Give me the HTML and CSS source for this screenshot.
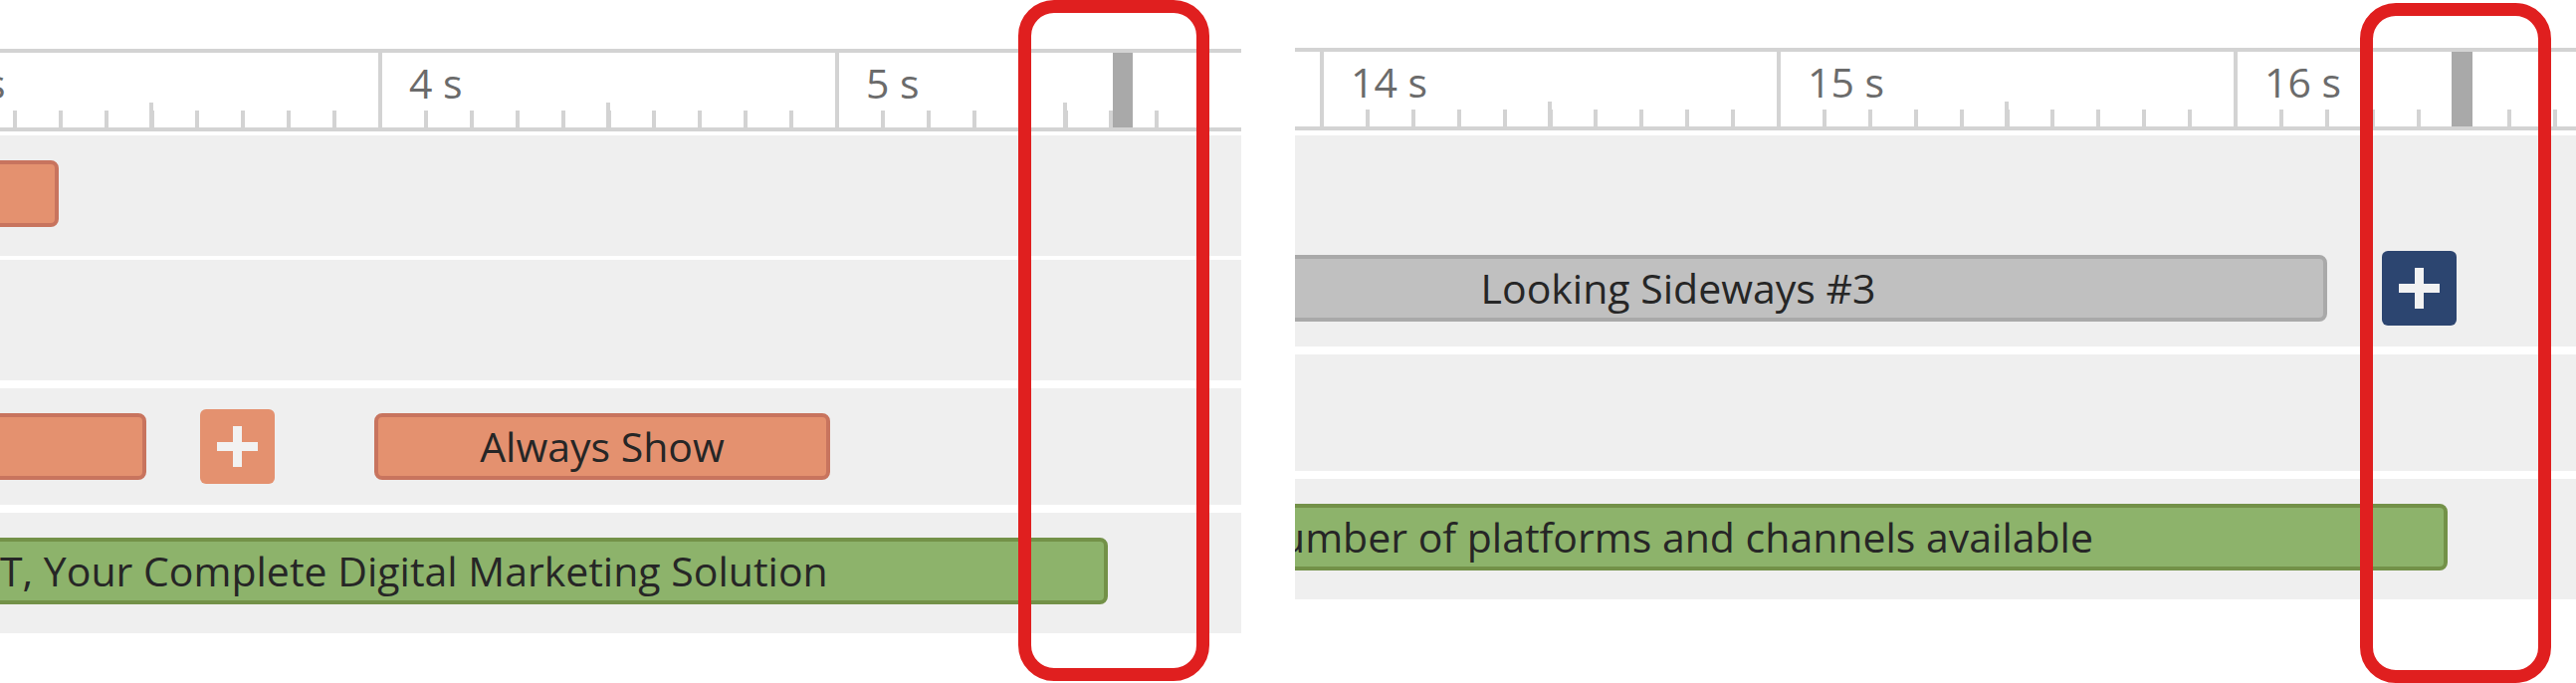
FILE: index.html
```html
<!DOCTYPE html>
<html>

<head>
    <meta charset="utf-8" />
    <title>Timeline</title>
    <link rel="stylesheet" href="styles.css">
</head>

<body>
    <div class="screen">
        <!-- left timeline -->
        <div class="panel panel-left">
            <div class="ruler">
                <div class="sec" style="margin-left:-79px">3 s</div>
                <div class="sec">4 s</div>
                <div class="sec">5 s</div>
                <div class="playhead" style="left:1118px;width:20px"></div>
            </div>
            <div class="track">
                <div class="clip clip-orange" style="left:-300px;width:359px"></div>
            </div>
            <div class="track gap-s"></div>
            <div class="track track-short">
                <div class="clip clip-orange" style="left:-300px;width:447px"></div>
                <div class="add add-orange" style="left:201px">
                    <svg viewBox="0 0 75 75"><rect x="17" y="33" width="41" height="9" /><rect x="33" y="17" width="9" height="41" /></svg>
                </div>
                <div class="clip clip-orange" style="left:376px;width:458px">Always Show</div>
            </div>
            <div class="track">
                <div class="clip clip-green text-left" style="left:-300px;width:1413px">T, Your Complete Digital Marketing Solution</div>
            </div>
        </div>

        <!-- right timeline -->
        <div class="panel panel-right">
            <div class="ruler">
                <div class="sec" style="margin-left:25px">14 s</div>
                <div class="sec">15 s</div>
                <div class="sec">16 s</div>
                <div class="playhead" style="left:1162px;width:21px"></div>
            </div>
            <div class="track track-tall">
                <div class="clip clip-gray" style="left:-267px;width:1304px">Looking Sideways #3</div>
                <div class="add add-navy" style="left:1092px">
                    <svg viewBox="0 0 75 75"><rect x="17" y="33" width="41" height="9" /><rect x="33" y="17" width="9" height="41" /></svg>
                </div>
            </div>
            <div class="track track-short"></div>
            <div class="track">
                <div class="clip clip-green text-right" style="left:-400px;width:1558px">number of platforms and channels available</div>
            </div>
        </div>

        <div class="mark" style="left:1023px;top:0;height:684px"></div>
        <div class="mark" style="left:2371px;top:3px;height:683px"></div>
    </div>
</body>

</html>
```

FILE: styles.css
```css
* {
    margin: 0;
    padding: 0;
    box-sizing: border-box;
}

body {
    background: #fff;
    font-family: "Open Sans", "Noto Sans", sans-serif;
    overflow: hidden;
}

.screen {
    position: relative;
    width: 2588px;
    height: 686px;
    display: flex;
    gap: 54px;
    overflow: hidden;
}

.panel {
    flex: none;
    display: flex;
    flex-direction: column;
    overflow: hidden;
}

.panel-left {
    width: 1247px;
    padding-top: 49px;
}

.panel-right {
    width: 1287px;
    padding-top: 48px;
}

/* ruler */
.ruler {
    position: relative;
    display: flex;
    height: 83px;
    border-top: 4px solid #d3d3d3;
    border-bottom: 4px solid #d3d3d3;
    overflow: hidden;
}

.sec {
    flex: none;
    width: 459px;
    height: 75px;
    padding: 10px 0 0 31px;
    font-size: 41px;
    line-height: 41px;
    color: #6b6b6b;
    white-space: nowrap;
    background:
        linear-gradient(#d3d3d3, #d3d3d3) 0 0 / 4px 100% no-repeat,
        linear-gradient(#d3d3d3, #d3d3d3) 229px 100% / 4px 25px no-repeat,
        repeating-linear-gradient(90deg, #d3d3d3 0 4px, transparent 4px 45.9px) 0 100% / 100% 17px no-repeat;
}

.playhead {
    position: absolute;
    top: 0;
    bottom: 0;
    background: #a9a9a9;
}

/* tracks */
.track {
    position: relative;
    flex: none;
    height: 121px;
    margin-top: 8px;
    background: #efefef;
}

.ruler + .track {
    margin-top: 4px;
}

.panel-right .ruler + .track {
    margin-top: 5px;
}

.track.gap-s {
    margin-top: 4px;
}

.track-short {
    height: 117px;
}

.track-tall {
    height: 212px;
}

.clip {
    position: absolute;
    top: 25px;
    height: 67px;
    border: 4px solid;
    border-radius: 8px;
    font-size: 41px;
    line-height: 59px;
    color: #262626;
    text-align: center;
    white-space: nowrap;
    overflow: hidden;
}

.track-tall .clip {
    top: 120px;
}

.clip-orange {
    background: #e4916f;
    border-color: #c8745e;
}

.clip-green {
    background: #8db36b;
    border-color: #739148;
}

.clip-gray {
    background: #c0c0c0;
    border-color: #a9a9a9;
}

.text-left {
    text-align: left;
    padding-left: 296px;
}

.text-right {
    text-align: right;
    padding-right: 352px;
}

.add {
    position: absolute;
    top: 21px;
    width: 75px;
    height: 75px;
    border-radius: 6px;
}

.track-tall .add {
    top: 116px;
}

.add svg {
    display: block;
    width: 75px;
    height: 75px;
    fill: #f2f2f2;
}

.add-orange {
    background: #e4916f;
}

.add-navy {
    background: #2c4570;
}

/* red marker boxes */
.mark {
    position: absolute;
    width: 192px;
    border: 13px solid #e01f1f;
    border-radius: 36px;
}
```
